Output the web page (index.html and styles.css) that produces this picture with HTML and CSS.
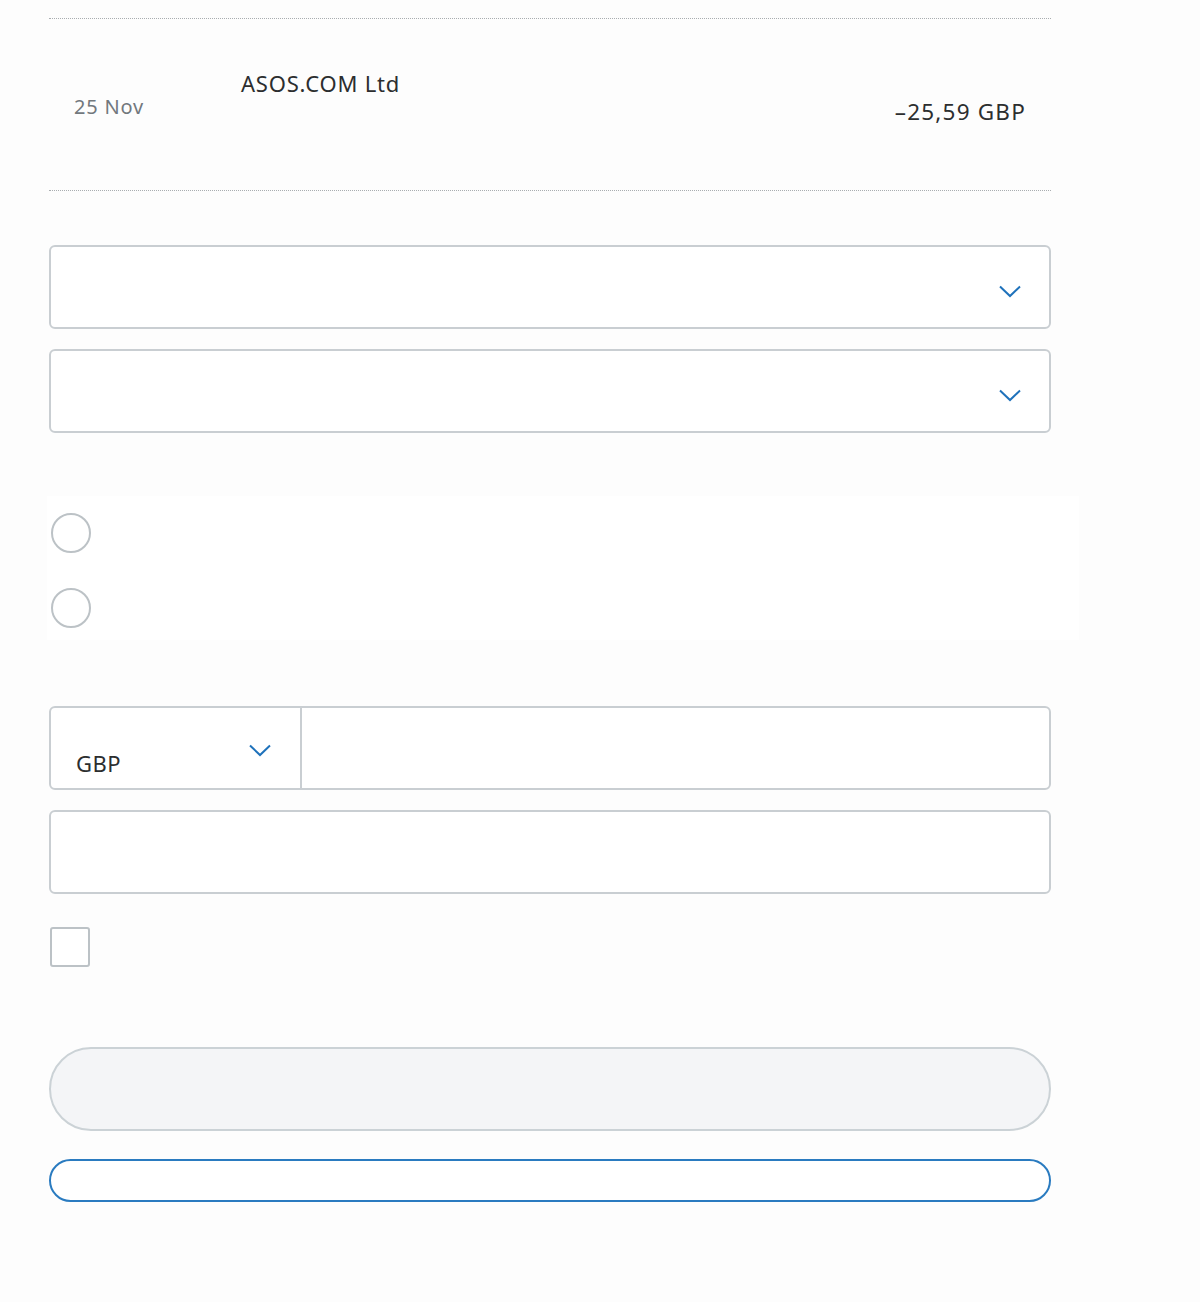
FILE: index.html
```html
<!DOCTYPE html>
<html lang="en">
<head>
    <meta charset="UTF-8">
    <meta name="viewport" content="width=device-width, initial-scale=1.0">
    <title>Transakcja</title>
    <link rel="stylesheet" href="styles.css">
</head>
<body>

<div class="page">
    <div class="divider"></div>

    <div class="txn">
        <div class="txn-date">25 Nov</div>
        <div class="txn-merchant">ASOS.COM Ltd</div>
        <div class="txn-amount">&ndash;25,59 GBP</div>
    </div>

    <div class="divider"></div>

    <form class="claim-form">
        <div class="select-box">
            <svg class="chevron" width="22" height="13" viewBox="0 0 22 13"><path d="M1 1.5 L11 11 L21 1.5" fill="none" stroke="currentColor" stroke-width="2"/></svg>
        </div>
        <div class="select-box">
            <svg class="chevron" width="22" height="13" viewBox="0 0 22 13"><path d="M1 1.5 L11 11 L21 1.5" fill="none" stroke="currentColor" stroke-width="2"/></svg>
        </div>

        <div class="radio-group">
            <label class="radio-row"><span class="radio"></span></label>
            <label class="radio-row"><span class="radio"></span></label>
        </div>

        <div class="money-row">
            <div class="currency">
                <span class="currency-code">GBP</span>
                <svg class="chevron" width="22" height="13" viewBox="0 0 22 13"><path d="M1 1.5 L11 11 L21 1.5" fill="none" stroke="currentColor" stroke-width="2"/></svg>
            </div>
            <div class="amount-field"></div>
        </div>

        <div class="text-field"></div>

        <label class="check-row"><span class="checkbox"></span></label>

        <button type="button" class="btn btn-primary"></button>
        <button type="button" class="btn btn-secondary"></button>
    </form>
</div>

</body>
</html>
```

FILE: styles.css
```css
body {
    font-family: 'Noto Sans', 'Open Sans', sans-serif;
    background-color: #fdfdfd;
    color: #2c2e2f; /* dark text */
    margin: 0;
    padding: 0;
}

.page {
    width: 1002px;
    margin-left: 49px;
    padding-top: 18px;
}

.divider {
    border-top: 1px dotted #a9adb0;
}

.txn {
    display: flex;
    align-items: flex-start;
    height: 171px;
    padding: 0 25px;
    box-sizing: border-box;
    letter-spacing: 0.8px;
}

.txn-date {
    width: 167px;
    margin-top: 75px;
    font-size: 20px;
    line-height: 26px;
    color: #72787d; /* grey */
}

.txn-merchant {
    flex: 1;
    margin-top: 49px;
    font-size: 22px;
    line-height: 30px;
}

.txn-amount {
    margin-top: 78px;
    font-size: 22.5px;
    line-height: 30px;
    letter-spacing: 1.2px;
}

.claim-form {
    display: flex;
    flex-direction: column;
    padding-top: 54px;
}

.select-box,
.text-field,
.money-row {
    height: 84px;
    border: 2px solid #c9ced2;
    border-radius: 6px;
    box-sizing: border-box;
    background-color: #fff;
}

.select-box {
    display: flex;
    justify-content: flex-end;
    align-items: center;
    padding: 9px 28px 0 0;
    margin-bottom: 20px;
}

.chevron {
    color: #1f72bb; /* blue */
    display: block;
}

.radio-group {
    margin: 43px 0 66px -2px;
    width: 1028px;
    padding: 17px 0 12px 4px;
    background-color: #fff;
    display: flex;
    flex-direction: column;
    gap: 35px;
}

.radio {
    display: block;
    width: 40px;
    height: 40px;
    border: 2px solid #bcc2c6;
    border-radius: 50%;
    box-sizing: border-box;
    background-color: #fff;
}

.money-row {
    display: flex;
    margin-bottom: 20px;
}

.currency {
    width: 251px;
    box-sizing: border-box;
    border-right: 2px solid #c9ced2;
    display: flex;
    justify-content: space-between;
    align-items: flex-start;
    padding: 0 29px 0 25px;
    letter-spacing: 0.5px;
}

.currency-code {
    font-size: 22px;
    line-height: 30px;
    margin-top: 40px;
}

.currency .chevron {
    margin-top: 36px;
}

.amount-field {
    flex: 1;
}

.text-field {
    margin-bottom: 33px;
}

.check-row {
    display: block;
    margin-left: 1px;
}

.checkbox {
    display: block;
    width: 40px;
    height: 40px;
    border: 2px solid #bcc2c6;
    border-radius: 3px;
    box-sizing: border-box;
    background-color: #fff;
}

.btn {
    display: block;
    width: 100%;
    box-sizing: border-box;
    border-radius: 999px;
    padding: 0;
    font-family: inherit;
}

.btn-primary {
    margin-top: 80px;
    height: 84px;
    border: 2px solid #cbd2d6;
    background-color: #f4f5f7;
}

.btn-secondary {
    margin-top: 28px;
    height: 43px;
    border: 2px solid #2a7bc0;
    background-color: #fff;
}
```
